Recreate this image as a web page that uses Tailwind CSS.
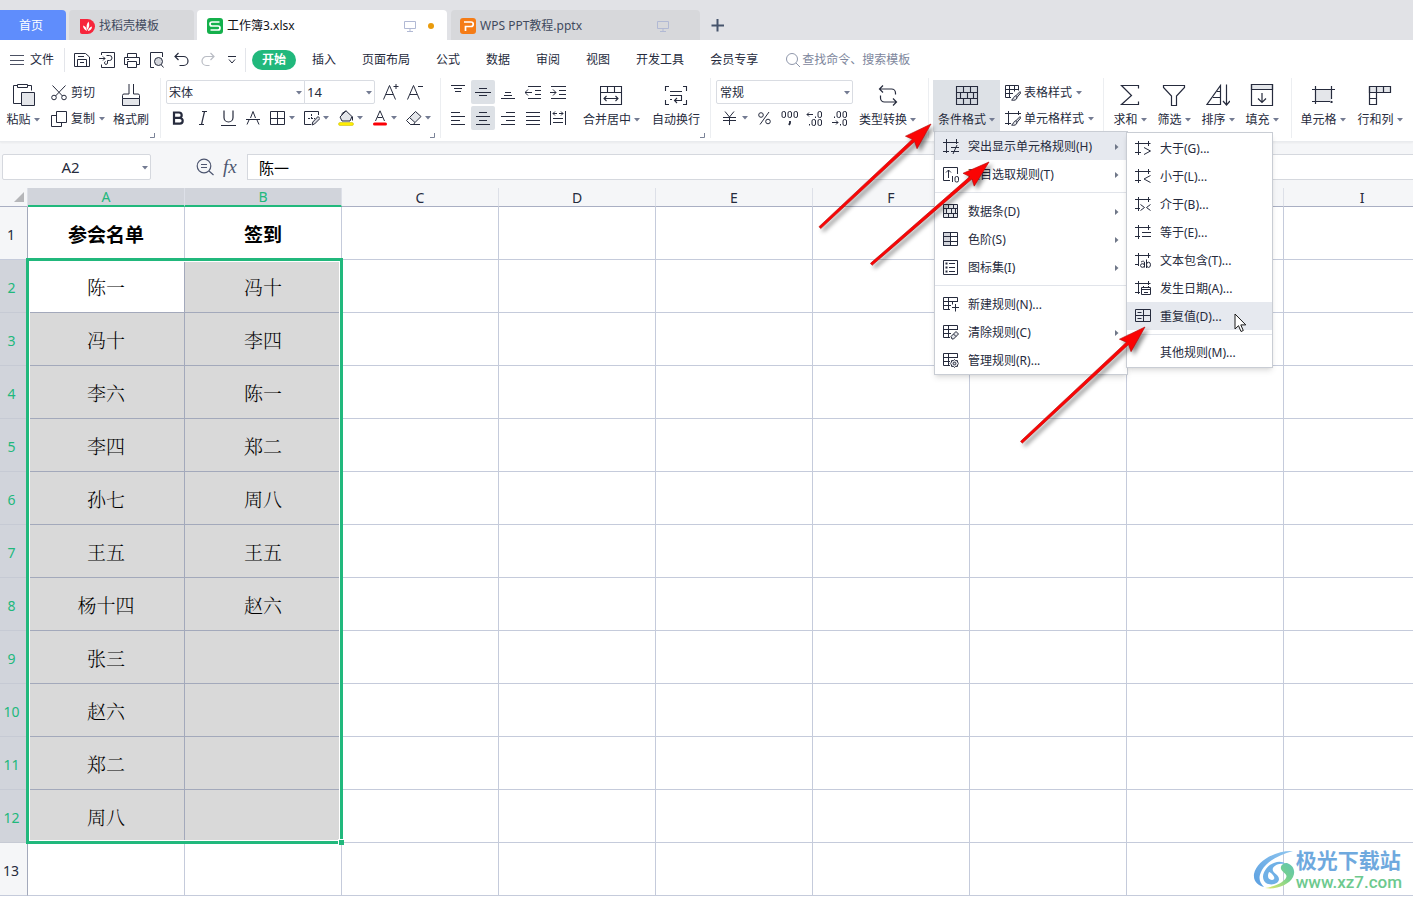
<!DOCTYPE html>
<html lang="zh-CN">
<head>
<meta charset="utf-8">
<title>工作簿3.xlsx</title>
<script src="https://cdn.jsdelivr.net/npm/@tailwindcss/browser@4"></script>
</head>
<body class="relative flex h-screen flex-col overflow-hidden bg-white font-['Noto_Sans','Noto_Sans_CJK_SC',sans-serif] text-xs leading-4 text-[#262b3d]">

<svg class="hidden" aria-hidden="true">
  <symbol id="caret" viewBox="0 0 6 4"><path d="M0 0h6L3 3.5z" fill="#737b92"/></symbol>
  <symbol id="sub" viewBox="0 0 4 6"><path d="M0 0v6l3.5-3z" fill="#6f7788"/></symbol>
  <symbol id="monitor" viewBox="0 0 12 12"><path d="M.5 1.500h11v7H.5zM6 8.500v2.500M3 11.500h6" fill="none" stroke="#b1b9d4"/></symbol>
  <symbol id="corner" viewBox="0 0 5 5"><path d="M4.500 0v4.500H0" fill="none" stroke="#7b8398"/></symbol>
  <symbol id="frame" viewBox="0 0 16 16"><path d="M0 3.500h15.500M3.500 0v15M0 12.500h6M13.500 0v6" fill="none" stroke="currentColor" stroke-width="1.100"/></symbol>
  <symbol id="brush" viewBox="0 0 10 10"><path d="M9 .6 4.600 5 6 6.400l3.800-4.600zM4.600 5C2.500 5 2.800 8 .6 9c2.400.8 5.400 0 5.400-2.600" fill="#e4e6ea" stroke="currentColor"/></symbol>
</svg>

<!-- Document tabs -->
<nav class="flex h-10 shrink-0 items-end bg-[#e1e2e6]" aria-label="文档">
  <button class="mr-[3px] h-[30px] w-[66px] rounded-tr-sm bg-[#5f8dfc] pt-[2px] pr-1 text-white">首页</button>
  <button class="mr-[3px] flex h-[30px] w-[125px] items-center gap-1 rounded-t-sm bg-[#d7d8db] pt-[2px] pl-[11px] text-[#414a5e]">
    <svg class="size-[15px]" viewBox="0 0 15 15"><path d="M0 0h7.500a7.500 7.500 0 0 1 0 15H2a2 2 0 0 1-2-2z" fill="#f7263c"/><path d="M7 12C4.500 11 3 9 3 6.500 5.500 7 6.500 9 7 12zM7.200 11C6 8 6.500 5 8.500 2.500 9.800 5.500 9.500 8.500 7.200 11zM7.800 12C8.500 9.500 10 8 12 7.500c0 2.500-1.500 4.300-4.200 4.500z" fill="#fff"/></svg>
    找稻壳模板</button>
  <button class="mr-1 flex h-[30px] w-[250px] items-center gap-1 rounded-t-sm bg-white pt-[2px] pl-[10px] text-[#101218]">
    <svg class="size-4" viewBox="0 0 16 16"><rect width="16" height="16" rx="3" fill="#14b04b"/><path d="M12.500 4H5a1.800 1.800 0 0 0 0 4h6a1.800 1.800 0 0 1 0 4H3.500" fill="none" stroke="#fff" stroke-width="1.700"/></svg>
    <span>工作簿3.xlsx</span>
    <svg class="mr-2 ml-auto size-3"><use href="#monitor"/></svg>
    <span class="mr-[13px] size-[6px] rounded-full bg-[#e99b0c]"></span></button>
  <button class="mr-[11px] flex h-[30px] w-[249px] items-center gap-1 rounded-t-sm bg-[#d7d8db] pt-[2px] pl-[9px] text-[#414a5e]">
    <svg class="size-4" viewBox="0 0 16 16"><rect width="16" height="16" rx="3" fill="#f57c16"/><path d="M4 4h7a2 2 0 0 1 0 4.500H5.500V13" fill="none" stroke="#fff" stroke-width="1.700"/></svg>
    <span>WPS PPT教程.pptx</span>
    <svg class="mr-[31px] ml-auto size-3"><use href="#monitor"/></svg></button>
  <button class="flex h-[30px] items-center" aria-label="新建"><svg class="size-[13px]" viewBox="0 0 13 13"><path d="M6.500 0v12.500M.5 6.500h12.500" stroke="#46546c" stroke-width="2"/></svg></button>
</nav>

<!-- Menu bar -->
<div class="flex h-[38px] shrink-0 items-center pt-[2px]">
  <button class="ml-[10px] flex items-center gap-[6px]"><svg class="h-[11px] w-[14px]" viewBox="0 0 14 11" stroke="#4c5163"><path d="M0 .5h14M0 5.500h14M0 9.500h14"/></svg>文件</button>
  <span class="mr-[9px] ml-[10px] h-6 w-px bg-[#e3e5ea]"></span>
  <div class="flex items-center gap-[9px]">
    <button aria-label="保存"><svg class="block size-4" viewBox="0 0 16 16" fill="none" stroke="currentColor"><path d="M.5 1.500h11l4 3.500v9.500H.5zM3.500 14.500v-7h9v7M4 4.500h6M6 10.500h4"/></svg></button>
    <button aria-label="输出为PDF"><svg class="block size-4" viewBox="0 0 16 16" fill="none" stroke="currentColor"><path d="M2.500 3V.5h13v15h-13v-3M0 6.500h6M4 4.500l2 2-2 2M7.500 3.500h3a2.500 2.500 0 0 1 0 5h-2v2.500a1.500 1.500 0 1 1-2-1.500"/></svg></button>
    <button aria-label="打印"><svg class="block size-4" viewBox="0 0 16 16" fill="none" stroke="currentColor"><path d="M3.500 5V1.500h9V5M3 12.500H.5v-7h15v7H13M3.500 9.500h9v6h-9zM3 7.500h2"/></svg></button>
    <button aria-label="打印预览"><svg class="block size-4" viewBox="0 0 16 16" fill="none" stroke="currentColor"><path d="M5 15.500H1.500V.5h12V5M14.500 15.500 12 12.500"/><circle cx="9.500" cy="9.500" r="4" fill="#d5d7dd"/></svg></button>
    <button aria-label="撤销"><svg class="block size-4" viewBox="0 0 16 16" fill="none" stroke="currentColor" stroke-width="1.200"><path d="M4.500 1 1 4.500 4.500 8M1 4.500h8.500a4.500 4.500 0 0 1 0 9H5.500"/></svg></button>
    <button class="pl-px" aria-label="恢复"><svg class="block size-4" viewBox="0 0 16 16" fill="none" stroke="#b9bcc4" stroke-width="1.200"><path d="M10.500 1 14 4.500 10.500 8M14 4.500H6.500a4.500 4.500 0 0 0 0 9h3"/></svg></button>
    <button aria-label="更多" class="pl-[3px]"><svg class="block size-2" viewBox="0 0 8 8" fill="none" stroke="currentColor"><path d="M0 .5h8M1 3.500 4 7l3-3.500"/></svg></button>
  </div>
  <span class="mr-[6px] ml-[9px] h-6 w-px bg-[#e3e5ea]"></span>
  <button class="mr-4 h-5 w-11 rounded-full bg-[#21b87c] font-bold text-white">开始</button>
  <div class="flex gap-[26px] whitespace-nowrap">
    <button>插入</button><button>页面布局</button><button>公式</button><button>数据</button><button>审阅</button><button>视图</button><button>开发工具</button><button>会员专享</button>
  </div>
  <label class="ml-7 flex items-center gap-[2px]"><svg class="size-[14px]" viewBox="0 0 14 14" fill="none" stroke="#8f97ab"><circle cx="6" cy="6" r="5.500"/><path d="m10 10 4 4"/></svg>
    <input class="w-[160px] text-xs outline-none placeholder:text-[#7d869c]" placeholder="查找命令、搜索模板" aria-label="查找命令、搜索模板"></label>
</div>

<!-- Ribbon -->
<div class="relative z-10 flex h-16 shrink-0 border-b border-[#e9ebee] bg-white whitespace-nowrap shadow-xs">
  <section class="relative flex h-[60px] w-[161px] shrink-0 border-r border-[#eceef1] pt-[2px] pl-[6px]">
    <button class="flex w-[34px] flex-col items-center gap-1 self-start pt-1">
      <svg class="size-6" viewBox="0 0 24 24" fill="none" stroke="currentColor"><path d="M6.500 1.500h-4v18h8M16.500 1.500h4v5"/><path d="M6.500.5h10v3h-10z"/><path d="M10.500 8.500h13v13h-13z" fill="#e4e6ea"/></svg>
      <span class="flex items-center gap-[3px]">粘贴<svg class="h-1 w-[6px]"><use href="#caret"/></svg></span></button>
    <div class="ml-[11px] flex flex-col gap-[2px]">
      <button class="flex h-6 items-center gap-1 pt-[2px]"><svg class="size-4" viewBox="0 0 16 16" fill="none" stroke="currentColor"><path d="M1.500.5 11.500 11M14.500.5 4.500 11"/><circle cx="3" cy="12.500" r="2.300"/><circle cx="13" cy="12.500" r="2.300"/></svg>剪切</button>
      <button class="flex h-6 items-center gap-1 pt-[2px]"><svg class="size-4" viewBox="0 0 16 16" fill="none" stroke="currentColor"><path d="M5.500.5h10v11h-10zM5 4.500H.5v11h10v-4"/></svg>复制<svg class="h-1 w-[6px]"><use href="#caret"/></svg></button>
    </div>
    <button class="ml-2 flex flex-col items-center gap-1 self-start pt-1">
      <svg class="size-6" viewBox="0 0 24 24" fill="none" stroke="currentColor"><path d="M3.500 14.500h17v7h-17z" fill="#e4e6ea"/><path d="M3.500 14.500v-3a1.500 1.500 0 0 1 1.500-1.500h5V-.5h4.500V10H19a1.500 1.500 0 0 1 1.500 1.500v3"/></svg>格式刷</button>
    <svg class="absolute right-[5px] bottom-0 size-[5px]"><use href="#corner"/></svg>
  </section>

  <section class="relative flex h-[60px] w-[280px] shrink-0 flex-col gap-[2px] border-r border-[#eceef1] pt-[2px] pl-[5px]">
    <div class="flex h-6 items-center">
      <label class="relative flex"><select aria-label="字体" class="h-6 w-[139px] appearance-none rounded-l-xs border border-[#d9dce2] bg-white pt-px pl-[2px] outline-none"><option>宋体</option></select><svg class="absolute top-[11px] right-[3px] h-1 w-[6px]"><use href="#caret"/></svg></label>
      <label class="relative -ml-px flex"><select aria-label="字号" class="h-6 w-[71px] appearance-none rounded-r-xs border border-[#d9dce2] bg-white pl-[2px] text-[13px] outline-none"><option>14</option></select><svg class="absolute top-[11px] right-[3px] h-1 w-[6px]"><use href="#caret"/></svg></label>
      <button class="ml-2" aria-label="增大字号"><svg class="block size-4" viewBox="0 0 16 16" fill="none" stroke="currentColor"><path d="M.5 15.500 6.500 1.500l6 14M3 10.500h7M10.500 2.500h5M13 0v5"/></svg></button>
      <button class="ml-2" aria-label="减小字号"><svg class="block size-4" viewBox="0 0 16 16" fill="none" stroke="currentColor"><path d="M.5 15.500 6.500 1.500l6 14M3 10.500h7M11 2.500h5"/></svg></button>
    </div>
    <div class="flex h-6 items-center">
      <button class="flex w-[25px] justify-center" aria-label="加粗"><svg class="size-4" viewBox="0 0 16 16" fill="none" stroke="currentColor" stroke-width="2.200"><path d="M3 2.500h5a2.700 2.700 0 0 1 0 5.400H3zM3 7.900h5.800a2.900 2.900 0 0 1 0 5.800H3z"/></svg></button>
      <button class="flex w-[25px] justify-center" aria-label="倾斜"><svg class="size-4" viewBox="0 0 16 16" fill="none" stroke="currentColor" stroke-width="1.200"><path d="M6 1.500h5M3 14.500h5M8.500 1.500l-3 13"/></svg></button>
      <button class="flex w-[25px] justify-center" aria-label="下划线"><svg class="size-4" viewBox="0 0 16 16" fill="none" stroke="currentColor" stroke-width="1.200"><path d="M3 .5v7a4.500 4.500 0 0 0 9 0v-7M0 15.500h15"/></svg></button>
      <button class="flex w-[25px] justify-center" aria-label="删除线"><svg class="size-4" viewBox="0 0 16 16" fill="none" stroke="currentColor"><path d="M1 14.500 3 10M4.500 8 7 1.500 9.500 8M11 10l2 4.500M0 9.500h14"/></svg></button>
      <button class="flex w-[34px] items-center gap-[3px] pl-1" aria-label="边框"><svg class="size-4 shrink-0" viewBox="0 0 16 16" fill="none" stroke="currentColor"><path d="M.5 1.500h14v13H.5zM7.500 1.500v13M.5 8.500h14"/></svg><svg class="h-1 w-[6px] shrink-0"><use href="#caret"/></svg></button>
      <button class="flex w-[34px] items-center gap-[3px] pl-1" aria-label="绘图边框"><svg class="size-4 shrink-0" viewBox="0 0 16 16" fill="none" stroke="currentColor"><path d="M7 14.500H.5v-13h14V5"/><path d="M7.500 4v6M4 8.500h7" stroke-dasharray="2 1"/><path d="m8 15 .8-3L14 6.500l2 2L10.500 14z" fill="#d9dbe1"/></svg><svg class="h-1 w-[6px] shrink-0"><use href="#caret"/></svg></button>
      <button class="flex w-[34px] items-center gap-[3px] pl-1" aria-label="填充颜色"><svg class="size-4 shrink-0" viewBox="0 0 16 16" fill="none" stroke="currentColor"><path d="m8 .8 6 5.700-2 4.500H4L2 7z" fill="#e4e6ea"/><path d="M4 5V3.500L8 .8M14.500 6.500v4"/><rect x=".5" y="12.500" width="15" height="3" rx="1.500" fill="#ffee00" stroke="#c5b800" stroke-width=".5"/></svg><svg class="h-1 w-[6px] shrink-0"><use href="#caret"/></svg></button>
      <button class="flex w-[34px] items-center gap-[3px] pl-1" aria-label="字体颜色"><svg class="size-4 shrink-0" viewBox="0 0 16 16" fill="none" stroke="currentColor"><path d="M3.500 11 8 .8 12.500 11M5.500 7.500h5"/><rect x="1" y="12.500" width="14" height="3" rx="1.500" fill="#fb0006" stroke="none"/></svg><svg class="h-1 w-[6px] shrink-0"><use href="#caret"/></svg></button>
      <button class="flex w-[34px] items-center gap-[3px] pl-1" aria-label="清除"><svg class="size-4 shrink-0" viewBox="0 0 16 16" fill="none" stroke="currentColor"><path d="m9.500 1.500 5.500 5-6 6-5.500-5z" fill="#e4e6ea"/><path d="m3.500 7.500-3 3 4 4h3L9 12.500M4.500 14.500H14"/></svg><svg class="h-1 w-[6px] shrink-0"><use href="#caret"/></svg></button>
    </div>
    <svg class="absolute right-[5px] bottom-0 size-[5px]"><use href="#corner"/></svg>
  </section>

  <section class="relative flex h-[60px] w-[270px] shrink-0 border-r border-[#eceef1] pt-[2px] pl-[5px]">
    <div class="grid h-[50px] grid-cols-[repeat(5,24px)] grid-rows-2 gap-x-px gap-y-[2px]">
      <button class="flex items-center justify-center" aria-label="顶端对齐"><svg class="size-4" viewBox="0 0 16 16" stroke="currentColor"><path d="M1 1.500h14M4 4.500h8M5 7.500h6"/></svg></button>
      <button class="flex items-center justify-center rounded-xs bg-[#dde1e6]" aria-label="垂直居中"><svg class="size-4" viewBox="0 0 16 16" stroke="currentColor"><path d="M4 4.500h8M0 8.500h16M4 11.500h8"/></svg></button>
      <button class="flex items-center justify-center" aria-label="底端对齐"><svg class="size-4" viewBox="0 0 16 16" stroke="currentColor"><path d="M5 8.500h6M4 11.500h8M1 14.500h14"/></svg></button>
      <button class="flex items-center justify-center" aria-label="减少缩进"><svg class="size-4" viewBox="0 0 16 16" fill="none" stroke="currentColor"><path d="M3 2.500h13M10 6.500h6M10 10.500h6M3 14.500h13M0 8.500h7M3 5.500l-3 3 3 3"/></svg></button>
      <button class="flex items-center justify-center" aria-label="增加缩进"><svg class="size-4" viewBox="0 0 16 16" fill="none" stroke="currentColor"><path d="M1 2.500h15M9 6.500h7M9 10.500h7M1 14.500h15M0 8.500h6M3 5.500l3 3-3 3"/></svg></button>
      <button class="flex items-center justify-center" aria-label="左对齐"><svg class="size-4" viewBox="0 0 16 16" stroke="currentColor"><path d="M1 2.500h9M1 6.500h14M1 10.500h9M1 14.500h14"/></svg></button>
      <button class="flex items-center justify-center rounded-xs bg-[#dde1e6]" aria-label="水平居中"><svg class="size-4" viewBox="0 0 16 16" stroke="currentColor"><path d="M4 2.500h8M1 6.500h14M4 10.500h8M1 14.500h14"/></svg></button>
      <button class="flex items-center justify-center" aria-label="右对齐"><svg class="size-4" viewBox="0 0 16 16" stroke="currentColor"><path d="M6 2.500h9M1 6.500h14M6 10.500h9M1 14.500h14"/></svg></button>
      <button class="flex items-center justify-center" aria-label="两端对齐"><svg class="size-4" viewBox="0 0 16 16" stroke="currentColor"><path d="M1 2.500h14M1 6.500h14M1 10.500h14M1 14.500h14"/></svg></button>
      <button class="flex items-center justify-center" aria-label="分散对齐"><svg class="size-4" viewBox="0 0 16 16" fill="none" stroke="currentColor"><path d="M.5 1v14M15.500 1v14M3 3.500h4M9 3.500h4M5 1.500l-2 2 2 2M11 1.500l2 2-2 2M3 8.500h10M3 12.500h10"/></svg></button>
    </div>
    <button class="ml-[13px] flex flex-col items-center gap-1 self-start pt-1">
      <svg class="size-6" viewBox="0 0 24 24" fill="none" stroke="currentColor" stroke-width="1.100"><path d="M.5 2.500h21v18H.5zM.5 8.500h21M7.500 2.500v6M14.500 2.500v6M4 14.500h14M6.500 12 4 14.500 6.500 17M15.500 12l2.500 2.500-2.500 2.500"/></svg>
      <span class="flex items-center gap-[3px]">合并居中<svg class="h-1 w-[6px]"><use href="#caret"/></svg></span></button>
    <button class="ml-3 flex flex-col items-center gap-1 self-start pt-1">
      <svg class="size-6" viewBox="0 0 24 24" fill="none" stroke="currentColor" stroke-width="1.100"><path d="M5 2.500H1.500V7M19 2.500h3.500V7M5 20.500H1.500V16M19 20.500h3.500V16M6 7.500h12M6 11.500h12M6 15.500h2M17.500 11.500v5h-7M13 14l-2.500 2.500L13 19"/></svg>自动换行</button>
    <svg class="absolute right-[5px] bottom-0 size-[5px]"><use href="#corner"/></svg>
  </section>

  <section class="flex h-[60px] w-[218px] shrink-0 border-r border-[#eceef1] pt-[2px] pl-[5px]">
    <div class="flex flex-col gap-[2px]">
      <label class="relative flex"><select aria-label="数字格式" class="h-6 w-[137px] appearance-none rounded-xs border border-[#d9dce2] bg-white pt-px pl-[3px] outline-none"><option>常规</option></select><svg class="absolute top-[11px] right-[3px] h-1 w-[6px]"><use href="#caret"/></svg></label>
      <div class="flex h-6 items-center">
        <button class="flex w-9 items-center gap-1 pl-[6px]" aria-label="货币"><svg class="size-4 shrink-0" viewBox="0 0 16 16" fill="none" stroke="currentColor"><path d="M3 1.500 7.500 7 12 1.500M7.500 7v8M1 7.500h13M1 10.500h13"/></svg><svg class="h-1 w-[6px] shrink-0"><use href="#caret"/></svg></button>
        <button class="flex w-[25px] justify-center" aria-label="百分比"><svg class="size-4" viewBox="0 0 16 16" fill="none" stroke="currentColor"><circle cx="4" cy="5" r="2.300"/><circle cx="11" cy="11.500" r="2.300"/><path d="M12 2 3 14.500"/></svg></button>
        <button class="flex w-[25px] justify-center" aria-label="千位分隔"><svg class="h-4 w-[18px]" viewBox="0 0 18 16" fill="none" stroke="currentColor"><rect x="1" y="1.500" width="3.500" height="6" rx="1.500"/><rect x="7" y="1.500" width="3.500" height="6" rx="1.500"/><rect x="13" y="1.500" width="3.500" height="6" rx="1.500"/><path d="M9 11v2l-1 2" stroke-width="1.800"/></svg></button>
        <button class="flex w-[25px] justify-center" aria-label="增加小数位数"><svg class="h-4 w-[18px]" viewBox="0 0 18 16" fill="none" stroke="currentColor"><path d="M1 4.500h6M3 2.500l-2 2 2 2M9.500 6.500v1.500M3.500 14v1.500"/><rect x="12" y="1.500" width="3.500" height="6" rx="1.500"/><rect x="6" y="9.500" width="3.500" height="6" rx="1.500"/><rect x="12" y="9.500" width="3.500" height="6" rx="1.500"/></svg></button>
        <button class="flex w-[25px] justify-center" aria-label="减少小数位数"><svg class="h-4 w-[18px]" viewBox="0 0 18 16" fill="none" stroke="currentColor"><path d="M1 12.500h6M5 10.500l2 2-2 2M9.500 14v1.500M3.500 6.500v1.500"/><rect x="6" y="1.500" width="3.500" height="6" rx="1.500"/><rect x="12" y="1.500" width="3.500" height="6" rx="1.500"/><rect x="12" y="9.500" width="3.500" height="6" rx="1.500"/></svg></button>
      </div>
    </div>
    <button class="ml-[6px] flex flex-col items-center gap-1 self-start pt-1">
      <svg class="size-6" viewBox="0 0 24 24" fill="none" stroke="currentColor" stroke-width="1.200"><path d="M7 1.500 3.500 5 7 8.500M3.500 5h12a4 4 0 0 1 4 4v1.500M4.500 11.500V14a4 4 0 0 0 4 4h12M17 14.500l3.500 3.500-3.500 3.500"/></svg>
      <span class="flex items-center gap-[3px]">类型转换<svg class="h-1 w-[6px]"><use href="#caret"/></svg></span></button>
  </section>

  <section class="relative flex h-[60px] w-[175px] shrink-0 border-r border-[#eceef1] pt-[2px] pl-[4px]">
    <button class="flex h-[52px] w-[67px] flex-col items-center gap-1 bg-[#dde1e6] pt-1">
      <svg class="size-6" viewBox="0 0 24 24" fill="none" stroke="currentColor" stroke-width="1.100"><path d="M1.500 2.500h21v18h-21z" fill="#d3d8df"/><path d="M1.500 8.500h21M1.500 14.500h21M8.500 2.500v6M15.500 2.500v6M5.500 8.500v6M12.500 8.500v6M18.500 8.500v6M8.500 14.500v6M15.500 14.500v6"/></svg>
      <span class="flex items-center gap-[3px]">条件格式<svg class="h-1 w-[6px]"><use href="#caret"/></svg></span></button>
    <div class="ml-[5px] flex flex-col gap-[2px]">
      <button class="flex h-6 items-center gap-[3px] pt-[2px]"><svg class="size-4" viewBox="0 0 16 16" fill="none" stroke="currentColor"><path d="M.5.500h13v5M.5.500v12H6M.5 4.500h13M.5 8.500H8M4.500.500v12M9.500.500v6"/><svg x="6" y="6" width="10" height="10"><use href="#brush"/></svg></svg>表格样式<svg class="ml-px h-1 w-[6px]"><use href="#caret"/></svg></button>
      <button class="flex h-6 items-center gap-[3px] pt-[2px]"><svg class="size-4" viewBox="0 0 16 16" fill="none" stroke="currentColor"><path d="M0 2.500h16M3.500 0v14M0 12.500h6M13.500 0v4"/><svg x="6" y="5" width="10" height="10"><use href="#brush"/></svg></svg>单元格样式<svg class="ml-px h-1 w-[6px]"><use href="#caret"/></svg></button>
    </div>

    <!-- Conditional formatting menu -->
    <div role="menu" class="absolute top-[53px] left-[5px] w-[194px] border border-[#c9cdd4] bg-white shadow-md [&_button]:flex [&_button]:h-7 [&_button]:w-full [&_button]:items-center [&_button]:gap-[9px] [&_button]:pt-[2px] [&_button]:pl-2 [&_hr]:my-1 [&_hr]:border-[#e1e4ea]">
      <button role="menuitem" class="bg-[#e6e9ef]"><svg class="size-4" viewBox="0 0 16 16" fill="none" stroke="currentColor"><path d="M0 3.500h15.500M3.500 0v14M0 12.500h6M13.500 0v5M8 8.500h8M8 12.500h8M14 6l-4 9"/></svg>突出显示单元格规则(H)<svg class="mr-2 ml-auto h-[6px] w-1"><use href="#sub"/></svg></button>
      <button role="menuitem"><svg class="size-4 shrink-0" viewBox="0 0 16 16" fill="none" stroke="currentColor"><path d="M7 13.500H.5v-13h14V7M5.500 11V3M3 5.500 5.500 3 8 5.500M9.500 9v6"/><rect x="12" y="9.500" width="3.500" height="5.500" rx="1.500"/></svg>项目选取规则(T)<svg class="mr-2 ml-auto h-[6px] w-1"><use href="#sub"/></svg></button>
      <hr>
      <button role="menuitem"><svg class="size-4" viewBox="0 0 16 16" fill="none" stroke="currentColor"><path d="M.5.500h14v13H.5z" fill="#e4e6ea"/><path d="M.5 4.500h14M.5 9.500h14M5.500.500v4M10.500.500v4M3.500 4.500v5M8.500 4.500v5M12.500 4.500v5M5.500 9.500v4M10.500 9.500v4"/></svg>数据条(D)<svg class="mr-2 ml-auto h-[6px] w-1"><use href="#sub"/></svg></button>
      <button role="menuitem"><svg class="size-4" viewBox="0 0 16 16" fill="none" stroke="currentColor"><path d="M.5.500h7v13h-7z" fill="#d3d5db"/><path d="M.5.500h14v13H.5zM.5 4.500h14M.5 9.500h14M7.500.500v13"/></svg>色阶(S)<svg class="mr-2 ml-auto h-[6px] w-1"><use href="#sub"/></svg></button>
      <button role="menuitem"><svg class="size-4" viewBox="0 0 16 16" fill="none" stroke="currentColor"><path d="M.5.500h14v14H.5zM6 3.500h6M6 7.500h6M6 11.500h6"/><path d="M2.500 3.500h2M2.500 7.500h2M2.500 11.500h2" stroke-width="2"/></svg>图标集(I)<svg class="mr-2 ml-auto h-[6px] w-1"><use href="#sub"/></svg></button>
      <hr>
      <button role="menuitem"><svg class="size-4" viewBox="0 0 16 16" fill="none" stroke="currentColor"><path d="M7 12.500H.5v-12h14V5M.5 4.500h14M.5 8.500H8M5.500.500v12M9.500 4.500v3M12.500 7v7.500M9 10.500h7"/></svg>新建规则(N)...</button>
      <button role="menuitem"><svg class="size-4" viewBox="0 0 16 16" fill="none" stroke="currentColor"><path d="M7 12.500H.5v-12h14V5M.5 4.500h14M.5 8.500H8M5.500.500v12"/><path d="m8 11.500 5-5 2.500 2.500-5 5H9z" fill="#e4e6ea"/><path d="m10.500 9 2.500 2.500"/></svg>清除规则(C)<svg class="mr-2 ml-auto h-[6px] w-1"><use href="#sub"/></svg></button>
      <button role="menuitem"><svg class="size-4" viewBox="0 0 16 16" fill="none" stroke="currentColor"><path d="M7 12.500H.5v-12h14V5M.5 4.500h14M.5 8.500H7M5.500.500v12"/><path d="m11.500 6.500 1.200 1.200 1.700-.2.200 1.700 1.200 1.300-1.200 1.300-.2 1.700-1.700-.2-1.200 1.200-1.200-1.200-1.700.2-.2-1.700-1.200-1.300 1.200-1.300.2-1.700 1.700.2z" fill="#e4e6ea"/><circle cx="11.500" cy="10.500" r="1.300"/></svg>管理规则(R)...</button>
    </div>

    <!-- Highlight rules submenu -->
    <div role="menu" class="absolute top-[54px] left-[197px] w-[147px] border border-[#c9cdd4] bg-white py-px shadow-md [&_button]:flex [&_button]:h-7 [&_button]:w-full [&_button]:items-center [&_button]:gap-[9px] [&_button]:pt-[2px] [&_button]:pl-2">
      <button role="menuitem"><svg class="size-4" viewBox="0 0 16 16" fill="none" stroke="currentColor"><path d="M0 2.500h15.500M3.500 0v14M0 11.500h6M13.500 0v5M9 6.500l6.500 3.500L9 13.500"/></svg>大于(G)...</button>
      <button role="menuitem"><svg class="size-4" viewBox="0 0 16 16" fill="none" stroke="currentColor"><path d="M0 2.500h15.500M3.500 0v14M0 11.500h6M13.500 0v5M15.500 6.500 9 10l6.500 3.500"/></svg>小于(L)...</button>
      <button role="menuitem"><svg class="size-4" viewBox="0 0 16 16" fill="none" stroke="currentColor"><path d="M0 2.500h15.500M3.500 0v14M0 11.500h5M13.500 0v5M5.500 7.500l4 3-4 3M15.500 7.500l-4 3 4 3"/></svg>介于(B)...</button>
      <button role="menuitem"><svg class="size-4" viewBox="0 0 16 16" fill="none" stroke="currentColor"><path d="M0 2.500h15.500M3.500 0v14M0 11.500h5M13.500 0v5M7 7.500h9M7 11.500h9"/></svg>等于(E)...</button>
      <button role="menuitem"><svg class="size-4" viewBox="0 0 16 16" fill="none" stroke="currentColor"><path d="M0 2.500h15.500M3.500 0v13M0 11.500h4M13.500 0v5M6 9q3.500-2 3.500 1v4.500M10.500 5.500"/><ellipse cx="7.500" cy="12.500" rx="2" ry="1.800"/><path d="M11.500 6.500v8.500"/><ellipse cx="13.500" cy="11.800" rx="2" ry="2.600"/></svg>文本包含(T)...</button>
      <button role="menuitem"><svg class="size-4" viewBox="0 0 16 16" fill="none" stroke="currentColor"><path d="M0 2.500h15.500M3.500 0v13M0 11.500h5M13.500 0v4M6.500 6.500h9v7h-9zM6.500 8.500h9M8.500 5v2M13.500 5v2M9 11.500h4"/></svg>发生日期(A)...</button>
      <button role="menuitem" class="bg-[#e6e9ef]"><svg class="size-4" viewBox="0 0 16 16" fill="none" stroke="currentColor"><path d="M.5.500h15v12H.5zM8.500.500v12M.5 6.500h15M2.500 3.500h4M2.500 9.500h4"/></svg>重复值(D)...</button>
      <hr class="mt-1 mb-[3px] border-[#e1e4ea]">
      <button role="menuitem"><span class="size-4"></span>其他规则(M)...</button>
      <svg class="absolute top-[180px] left-[107px] h-5 w-[13px]" viewBox="0 0 13 20"><path d="M1 1v15l3.500-3.300L7 18.500l2.300-1-2.500-5.600h5z" fill="#fff" stroke="#1a1a1a"/></svg>
    </div>
  </section>

  <section class="flex h-[60px] w-[188px] shrink-0 items-start border-r border-[#eceef1] pt-[2px] pl-1">
    <button class="flex w-11 flex-col items-center gap-1 pt-1"><svg class="size-6" viewBox="0 0 24 24" fill="none" stroke="currentColor" stroke-width="1.200"><path d="M20.500 4.500v-3H3.500l10 10-10 9h17v-3"/></svg><span class="flex items-center gap-[3px]">求和<svg class="h-1 w-[6px]"><use href="#caret"/></svg></span></button>
    <button class="flex w-11 flex-col items-center gap-1 pt-1"><svg class="size-6" viewBox="0 0 24 24" fill="none" stroke="currentColor" stroke-width="1.200"><path d="M1.500 1.500h21v2l-8 8.500v9.500h-5V12l-8-8.500z"/></svg><span class="flex items-center gap-[3px]">筛选<svg class="h-1 w-[6px]"><use href="#caret"/></svg></span></button>
    <button class="flex w-11 flex-col items-center gap-1 pt-1"><svg class="size-6" viewBox="0 0 24 24" fill="none" stroke="currentColor" stroke-width="1.200"><path d="M14.500 1.500v19H1zM11 7.500h3.500M7 13.500h7.500M20.500.5v20M17 17l3.500 4 3.500-4"/></svg><span class="flex items-center gap-[3px]">排序<svg class="h-1 w-[6px]"><use href="#caret"/></svg></span></button>
    <button class="flex w-11 flex-col items-center gap-1 pt-1"><svg class="size-6" viewBox="0 0 24 24" fill="none" stroke="currentColor" stroke-width="1.200"><path d="M1.500.5h21v5h-21z" fill="#e4e6ea"/><path d="M1.500.5h21v21h-21zM12 9v9M8 14.500l4 4 4-4"/></svg><span class="flex items-center gap-[3px]">填充<svg class="h-1 w-[6px]"><use href="#caret"/></svg></span></button>
  </section>

  <section class="flex h-[60px] shrink-0 items-start pt-[2px] pl-[3px]">
    <button class="flex w-14 flex-col items-center gap-1 pt-1"><svg class="size-6" viewBox="0 0 24 24" fill="none" stroke="currentColor" stroke-width="1.200"><path d="M4.500 5.500h16v12h-16z" fill="#e4e6ea" stroke="none"/><path d="M1 5.500h23M1 17.500h18M4.500 2v18M20.500 2v13"/><path d="M19.500 18h2" stroke-width="2"/></svg><span class="flex items-center gap-[3px]">单元格<svg class="h-1 w-[6px]"><use href="#caret"/></svg></span></button>
    <button class="flex w-[58px] flex-col items-center gap-1 pt-1"><svg class="size-6" viewBox="0 0 24 24" fill="none" stroke="currentColor" stroke-width="1.200"><path d="M1.500 2.500h21v6h-21z" fill="#e4e6ea"/><path d="M8.500 2.500v18h-7v-18M15.500 2.500v6M1.500 14.500h7"/></svg><span class="flex items-center gap-[3px]">行和列<svg class="h-1 w-[6px]"><use href="#caret"/></svg></span></button>
  </section>
</div>

<!-- Formula bar -->
<div class="flex h-[46px] shrink-0 items-center bg-[#f5f6f8] pt-1 pl-[2px] text-[15px]">
  <label class="relative flex"><input aria-label="名称框" value="A2" class="h-[26px] w-[149px] rounded-xs border border-[#d5d8de] bg-white pr-3 text-center outline-none"><svg class="absolute top-[12px] right-[3px] h-1 w-[6px]"><use href="#caret"/></svg></label>
  <svg class="ml-[45px] size-[18px]" viewBox="0 0 18 18" fill="none" stroke="#4d5670" stroke-width="1.200"><circle cx="8" cy="8" r="6.800"/><path d="m13 13 4.500 4M5 6.500h6M5 9.500h6"/></svg>
  <span class="ml-[9px] w-[17px] font-['Liberation_Serif',serif] text-[19px] text-[#4d5670] italic">fx</span>
  <input aria-label="编辑栏" value="陈一" class="ml-[7px] h-[26px] min-w-0 flex-1 border border-r-0 border-[#d5d8de] bg-white pl-[11px] text-black outline-none">
</div>

<!-- Worksheet -->
<main class="relative min-h-0 flex-1 overflow-hidden">
  <table class="w-[1441px] table-fixed border-separate border-spacing-0 [&_tbody_td]:border-r [&_tbody_td]:border-b [&_tbody_td]:border-[#c5cbdb] [&_tbody_td]:p-0 [&_tbody_td]:pt-[2px] [&_tbody_td]:text-center [&_tbody_td]:text-[19px] [&_tbody_td]:text-black [&_tbody_th]:border-b [&_tbody_th]:p-0 [&_tbody_th]:pt-[3px] [&_tbody_th]:pr-[5px] [&_tbody_th]:text-[14px] [&_tbody_th]:font-normal [&_tbody_tr]:h-[53px] [&_thead_th]:h-[19px] [&_thead_th]:p-0 [&_thead_th]:text-[14px] [&_thead_th]:leading-[17px] [&_thead_th]:font-normal">
    <colgroup><col class="w-7"><col class="w-[157px]"><col class="w-[157px]"><col class="w-[157px]"><col class="w-[157px]"><col class="w-[157px]"><col class="w-[157px]"><col class="w-[157px]"><col class="w-[157px]"><col class="w-[157px]"></colgroup>
    <thead class="bg-[#f5f6f8] [&_th]:border-r [&_th]:border-b [&_th]:border-r-[#dde0e8] [&_th]:border-b-[#a9afc3]">
      <tr><th aria-label="全选"><svg class="ml-[14px] size-[10px]" viewBox="0 0 10 10"><path d="M10 0v10H0z" fill="#b5b6b9"/></svg></th><th class="!border-b-2 !border-b-[#21b87c] bg-[#d1d4db] text-[#21b87c]">A</th><th class="!border-b-2 !border-b-[#21b87c] bg-[#d1d4db] text-[#21b87c]">B</th><th>C</th><th>D</th><th>E</th><th>F</th><th></th><th></th><th>I</th></tr>
    </thead>
    <tbody class="[&_td]:font-['Noto_Sans_CJK_SC',sans-serif] [&_td]:font-bold">
      <tr><th class="border-r border-r-[#a3a9bb] border-b-[#c5cbdb] bg-[#f5f6f8]">1</th><td>参会名单</td><td>签到</td><td></td><td></td><td></td><td></td><td></td><td></td><td></td></tr>
    </tbody>
    <tbody class="[&_td]:font-['Noto_Serif_CJK_SC','Noto_Sans_CJK_SC',serif] [&_td]:font-light [&_td:nth-child(2)]:!border-[#a3a9bb] [&_td:nth-child(2)]:bg-[#d9d9d9] [&_td:nth-child(3)]:!border-[#a3a9bb] [&_td:nth-child(3)]:bg-[#d9d9d9] [&_th]:border-[#c6cad4] [&_th]:bg-[#d1d4db] [&_th]:text-[#21b87c] [&_tr:first-child_td:nth-child(2)]:!bg-white">
      <tr><th>2</th><td>陈一</td><td>冯十</td><td></td><td></td><td></td><td></td><td></td><td></td><td></td></tr>
      <tr><th>3</th><td>冯十</td><td>李四</td><td></td><td></td><td></td><td></td><td></td><td></td><td></td></tr>
      <tr><th>4</th><td>李六</td><td>陈一</td><td></td><td></td><td></td><td></td><td></td><td></td><td></td></tr>
      <tr><th>5</th><td>李四</td><td>郑二</td><td></td><td></td><td></td><td></td><td></td><td></td><td></td></tr>
      <tr><th>6</th><td>孙七</td><td>周八</td><td></td><td></td><td></td><td></td><td></td><td></td><td></td></tr>
      <tr><th>7</th><td>王五</td><td>王五</td><td></td><td></td><td></td><td></td><td></td><td></td><td></td></tr>
      <tr><th>8</th><td>杨十四</td><td>赵六</td><td></td><td></td><td></td><td></td><td></td><td></td><td></td></tr>
      <tr><th>9</th><td>张三</td><td></td><td></td><td></td><td></td><td></td><td></td><td></td><td></td></tr>
      <tr><th>10</th><td>赵六</td><td></td><td></td><td></td><td></td><td></td><td></td><td></td><td></td></tr>
      <tr><th>11</th><td>郑二</td><td></td><td></td><td></td><td></td><td></td><td></td><td></td><td></td></tr>
      <tr><th>12</th><td>周八</td><td></td><td></td><td></td><td></td><td></td><td></td><td></td><td></td></tr>
    </tbody>
    <tbody>
      <tr><th class="border-r border-r-[#a3a9bb] border-b-[#c5cbdb] bg-[#f5f6f8]">13</th><td></td><td></td><td></td><td></td><td></td><td></td><td></td><td></td><td></td></tr>
    </tbody>
  </table>

  <!-- Selection range A2:B12 -->
  <div class="pointer-events-none absolute top-[70px] left-[26px] h-[586px] w-[317px] border-3 border-[#21b87c]"><div class="h-full border border-white"></div><span class="absolute -right-[4px] -bottom-[4px] size-[6px] border-t border-l border-white bg-[#21b87c]"></span></div>

  <!-- Site mark -->
  <div class="absolute right-[11px] bottom-[5px] flex items-center">
    <svg class="h-[42px] w-[43px]" viewBox="0 0 43 42" fill="none">
      <defs><linearGradient id="ga" x1="0" y1="1" x2="1" y2="0"><stop stop-color="#5b9fe0"/><stop offset="1" stop-color="#8fc6f0"/></linearGradient><linearGradient id="gb" x1="0" y1="1" x2="1" y2="0"><stop stop-color="#e6ea6a"/><stop offset=".6" stop-color="#74d08f"/><stop offset="1" stop-color="#62c4b4"/></linearGradient></defs>
      <path d="M40 2C26 1 4 10 1 25c-1 8 5 12 10 13-5-5-6-10-2-17C14 12 26 6 40 2z" fill="url(#ga)"/>
      <path d="M13 20c4-6 14-10 20-5-5-1-11 0-13 4-2 5 6 6 6 11 0 5-8 7-13 4-4-3-4-9 0-14zm3 3c-2 4-1 8 3 8 4-1 2-4 0-6-1-1-2-2-3-2z" fill="#6fb0e6"/>
      <path d="M34 14c6 2 9 8 6 14-4 8-17 13-28 11 8-1 18-5 21-10 2-4-3-5-5-9-1-4 3-6 6-6z" fill="url(#gb)"/>
    </svg>
    <div><div class="text-[21px] leading-6 font-bold text-[#6fa9de]">极光下载站</div><div class="font-[Roboto,sans-serif] text-[17px] leading-5 font-medium text-[#6dc98e]">www.xz7.com</div></div>
  </div>
</main>

<!-- Pointer arrows -->
<svg class="pointer-events-none absolute inset-0 z-20 h-full w-full drop-shadow-[3px_3px_2px_rgba(0,0,0,0.45)]" aria-hidden="true">
  <g fill="#fb0404" stroke="#b50d0d" stroke-width=".6">
    <path transform="translate(931 124) rotate(-43)" d="M0 0-27-8.500-24-1.600-152-1.300v2.600L-24 1.600-27 8.500z"/>
    <path transform="translate(989 162) rotate(-41)" d="M0 0-27-8.500-24-1.600-156-1.300v2.600L-24 1.600-27 8.500z"/>
    <path transform="translate(1145 327) rotate(-43)" d="M0 0-27-8.500-24-1.600-169-1.300v2.600L-24 1.600-27 8.500z"/>
  </g>
</svg>
</body>
</html>
